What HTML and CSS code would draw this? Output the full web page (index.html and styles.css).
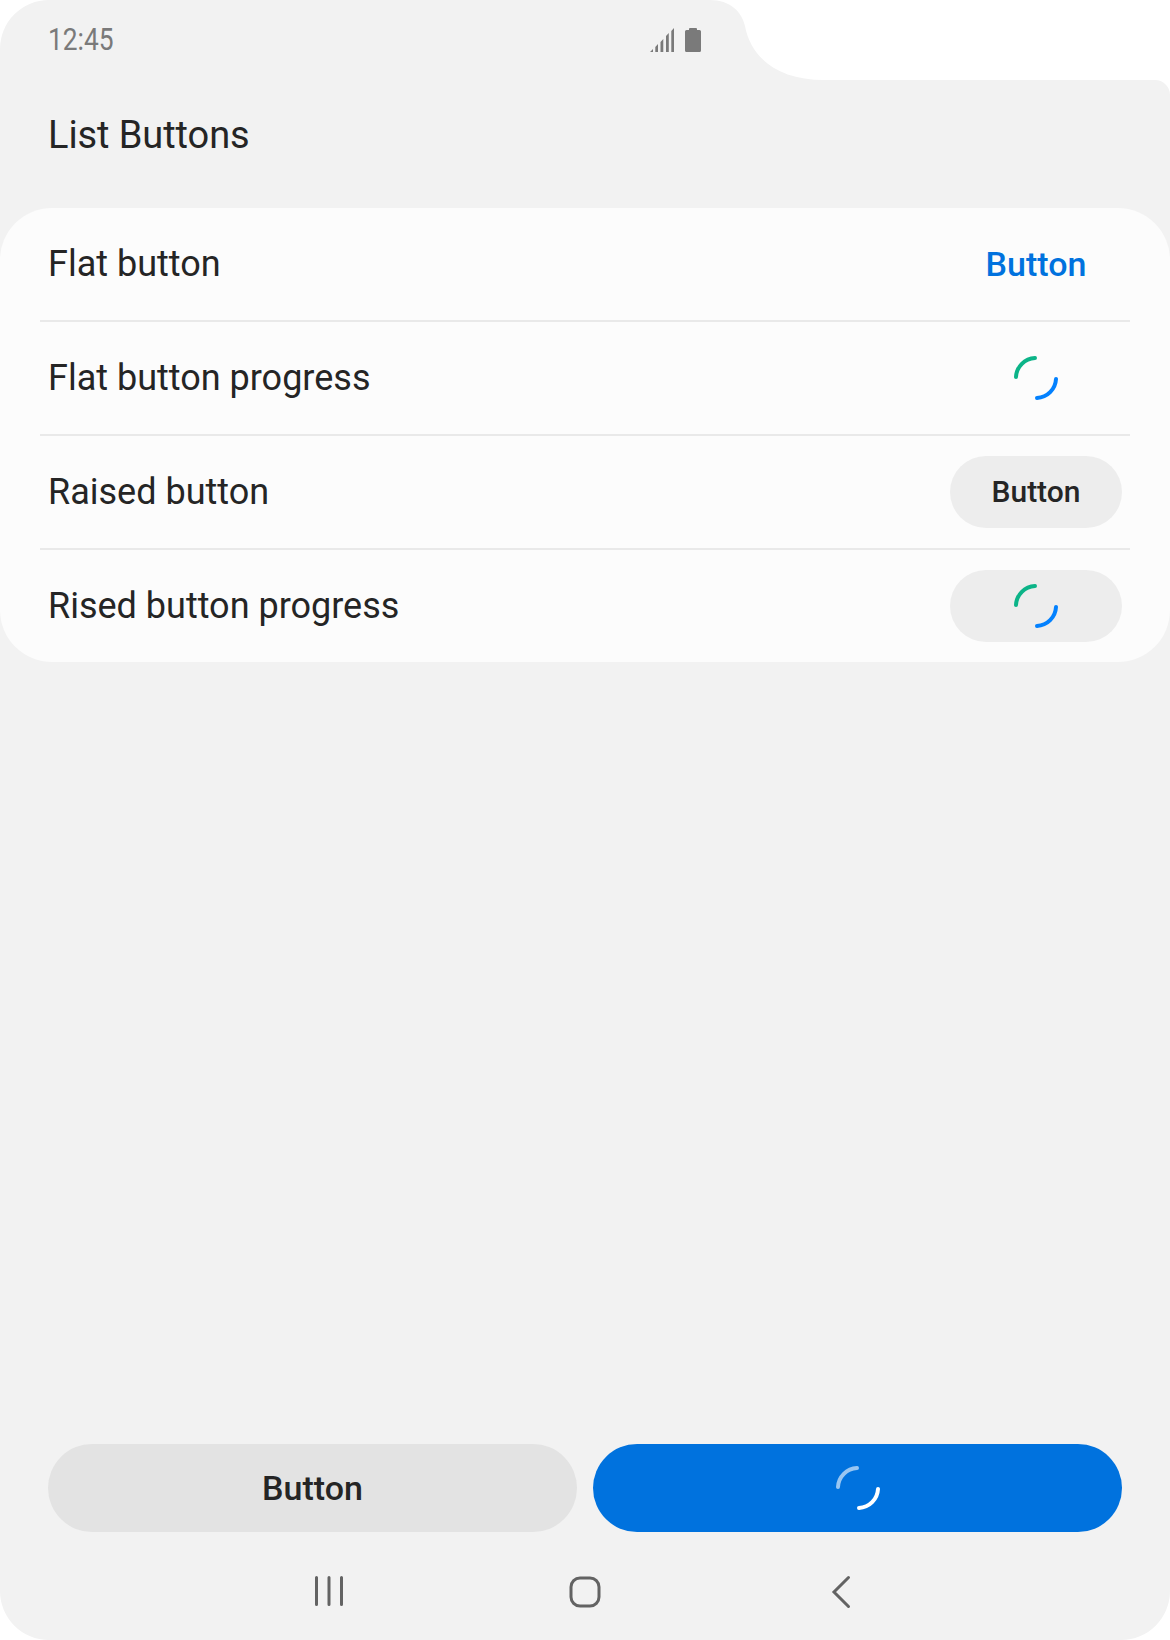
FILE: index.html
```html
<!DOCTYPE html>
<html lang="en">
<head>
<meta charset="utf-8">
<title>List Buttons</title>
<link rel="stylesheet" href="styles.css">
</head>
<body>
<svg class="defs" aria-hidden="true">
  <symbol id="spinner" viewBox="0 0 44 44">
    <path class="arc-start" d="M2 21A20 20 0 0 1 21 2"/>
    <path class="arc-end" d="M42 23A20 20 0 0 1 23 42"/>
  </symbol>
</svg>
<div class="screen">
  <header class="status">
    <span class="clock">12:45</span>
    <svg class="status-icons" viewBox="0 0 52 26">
      <path d="M0 25L3 22V25ZM5.300 25V20L8 17V25ZM10.500 25V15L13.300 12V25ZM16 25V9L18.800 6V25ZM21.300 25V4L24 1V25Z"/>
      <path d="M39 3V2Q39 1 40 1H46Q47 1 47 2V3H49.500Q51 3 51 4.500V23.500Q51 25 49.500 25H36.500Q35 25 35 23.500V4.500Q35 3 36.500 3Z"/>
    </svg>
  </header>
  <h1 class="title">List Buttons</h1>
  <main class="card">
    <div class="row"><span class="label">Flat button</span><button class="action flat">Button</button></div>
    <div class="row"><span class="label">Flat button progress</span><button class="action flat" aria-label="Loading"><svg class="spinner"><use href="#spinner"/></svg></button></div>
    <div class="row"><span class="label">Raised button</span><button class="action raised">Button</button></div>
    <div class="row"><span class="label">Rised button progress</span><button class="action raised" aria-label="Loading"><svg class="spinner"><use href="#spinner"/></svg></button></div>
  </main>
  <div class="footer">
    <button class="wide">Button</button>
    <button class="wide primary" aria-label="Loading"><svg class="spinner"><use href="#spinner"/></svg></button>
  </div>
  <nav class="nav">
    <svg class="nav-icon" viewBox="0 0 36 36"><path d="M5.500 3.500V30.500M18 3.500V30.500M30.500 3.500V30.500"/></svg>
    <svg class="nav-icon" viewBox="0 0 36 36"><rect x="4" y="4" width="28" height="28" rx="9"/></svg>
    <svg class="nav-icon" viewBox="0 0 36 36"><path d="M25.500 3.500L11 18L25.500 32.500"/></svg>
  </nav>
</div>
</body>
</html>
```
FILE: styles.css
```css
* { box-sizing: border-box; }
body {
  margin: 0;
  background: #fff;
  color: #252525;
  font-family: Roboto, "Liberation Sans", sans-serif;
}
.defs { display: block; width: 0; height: 0; }
.screen {
  display: flex;
  flex-direction: column;
  width: 1170px;
  height: 1640px;
  background: #f2f2f2;
  clip-path: path("M48 0H710C730 0 742 12 745 26C751 58 778 80 824 80H1155A15 15 0 0 1 1170 95V1591A49 49 0 0 1 1121 1640H49A49 49 0 0 1 0 1591V49A49 49 0 0 1 49 0Z");
}
.status {
  display: flex;
  justify-content: space-between;
  align-items: center;
  width: 750px;
  height: 80px;
  padding: 0 48px;
  color: #7a7a7a;
}
.clock {
  padding-bottom: 2px;
  font-size: 31px;
  transform: scaleX(.85);
  transform-origin: left;
}
.status-icons { width: 52px; height: 26px; fill: #7a7a7a; }
.title {
  height: 128px;
  margin: 0;
  padding-left: 48px;
  font-size: 38px;
  font-weight: 400;
  line-height: 110px;
  letter-spacing: -.08px;
}
.card { border-radius: 52px; background: #fcfcfc; }
.row {
  display: flex;
  align-items: center;
  justify-content: space-between;
  height: 114px;
  margin: 0 40px;
  padding: 0 8px;
  border-bottom: 2px solid #e9e9e9;
}
.row:last-child { height: 112px; border: 0; }
.label { font-size: 36px; line-height: 42px; }
button {
  display: flex;
  align-items: center;
  justify-content: center;
  padding: 0;
  border: 0;
  color: inherit;
  font: 500 34px/40px Roboto, "Liberation Sans", sans-serif;
}
.action { width: 172px; height: 72px; border-radius: 36px; }
.flat { background: transparent; color: #0072de; }
.raised { background: #ededed; font-size: 30px; }
.spinner { width: 44px; height: 44px; fill: none; stroke-width: 4; stroke-linecap: round; }
.arc-start { stroke: var(--arc-start, #0cb488); }
.arc-end { stroke: var(--arc-end, #0381fe); }
.footer {
  display: flex;
  gap: 16px;
  margin-top: auto;
  padding: 0 48px;
}
.wide { flex: 1; height: 88px; border-radius: 44px; background: #e3e3e3; }
.primary {
  --arc-start: rgba(255, 255, 255, .6);
  --arc-end: #fff;
  background: #0072de;
}
.nav {
  display: flex;
  justify-content: center;
  gap: 220px;
  height: 108px;
  padding-top: 42px;
}
.nav-icon { width: 36px; height: 36px; fill: none; stroke: #636363; stroke-width: 3; stroke-linecap: round; }
```
